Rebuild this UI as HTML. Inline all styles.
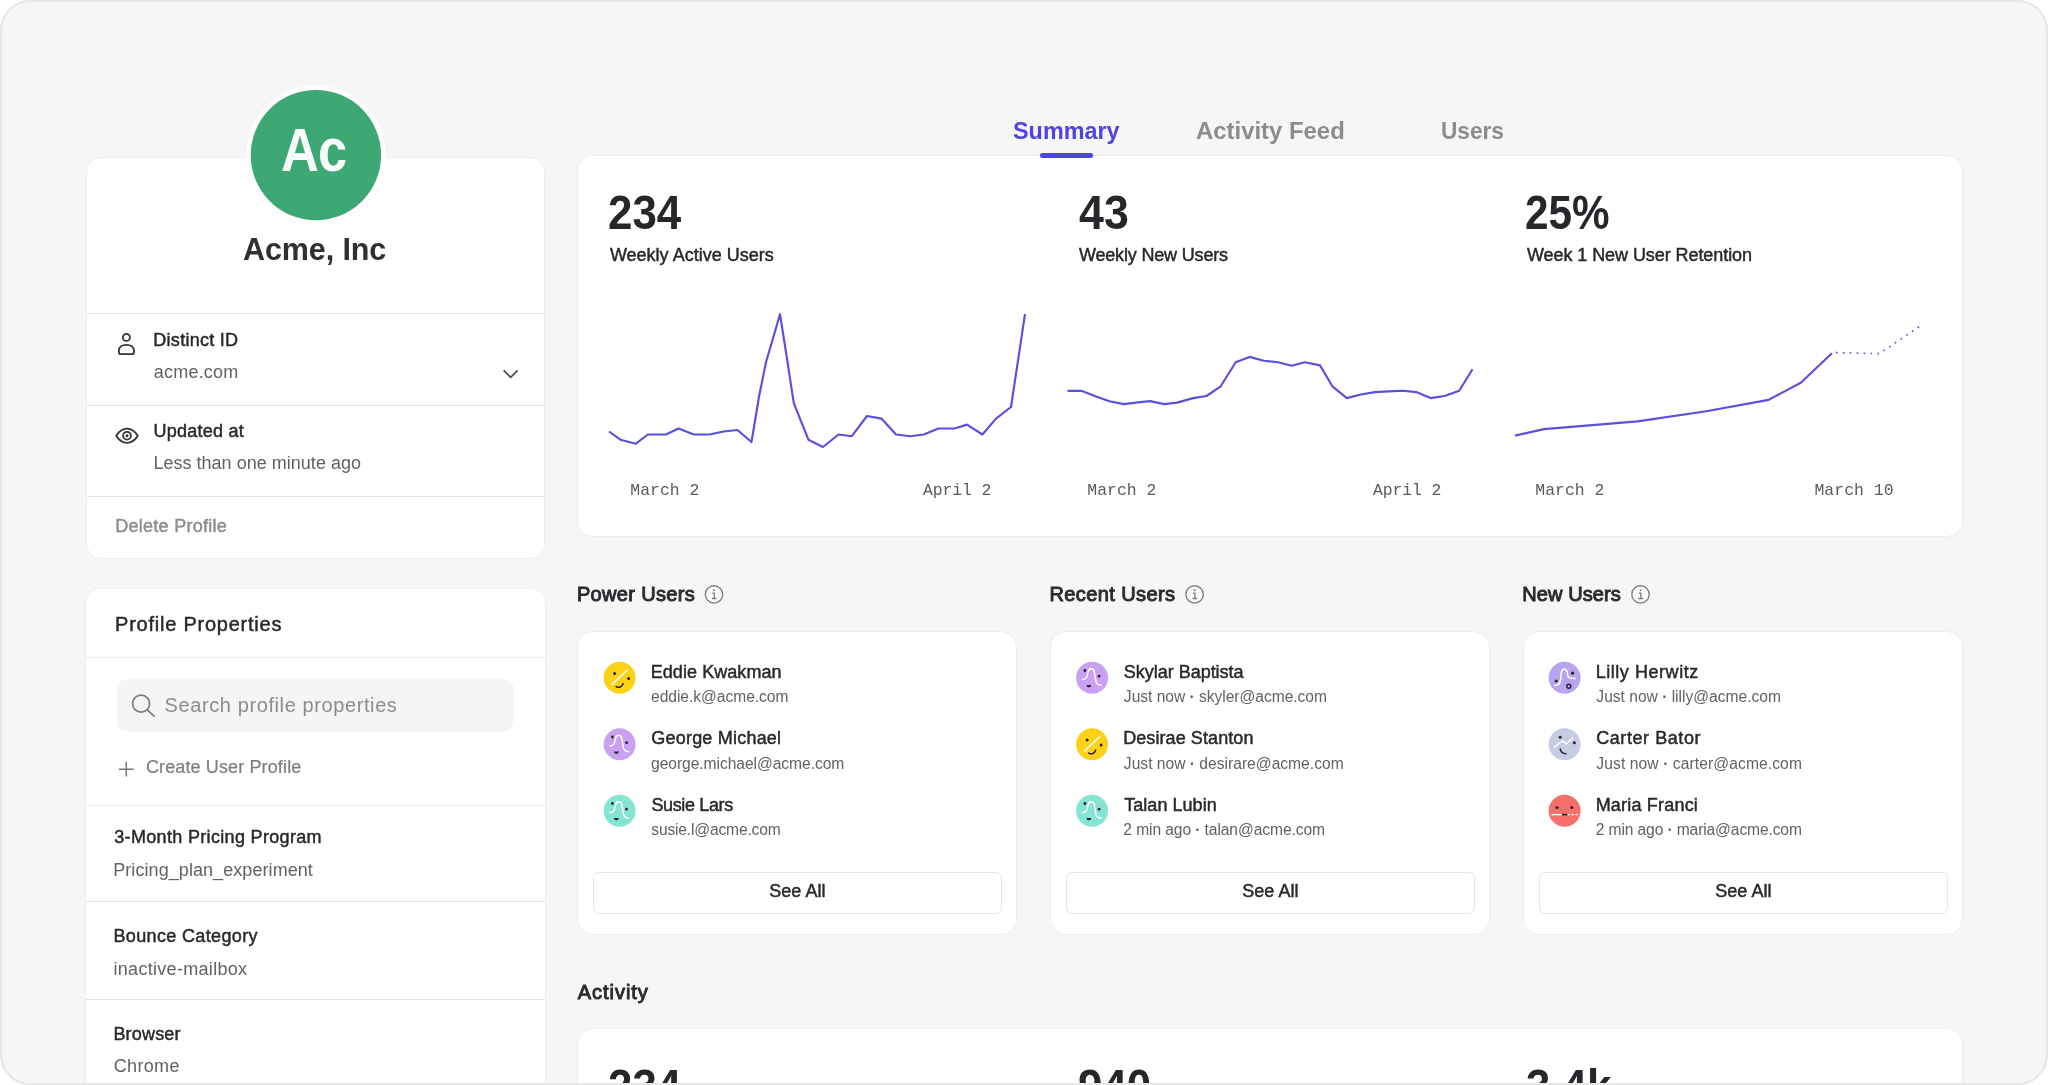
<!DOCTYPE html>
<html lang="en"><head><meta charset="utf-8"><title>Acme, Inc - Profile</title>
<style>
html,body{margin:0;padding:0;background:#fff;}
body{width:2048px;height:1085px;overflow:hidden;position:relative;font-family:"Liberation Sans",sans-serif;color:#27272c;}
#frame{position:absolute;left:0;top:0;width:2043.5px;height:1081px;border:2px solid #e7e7e7;border-right-width:2.5px;border-radius:30px;background:#f6f6f6;overflow:hidden;}
#in{position:absolute;left:-2px;top:-2px;width:2048px;height:1085px;will-change:transform;}
.card{position:absolute;background:#fff;border:1px solid #ededed;box-sizing:border-box;border-radius:16px;}
.t{position:absolute;white-space:nowrap;line-height:1.15;}
.m{-webkit-text-stroke:0.45px currentColor;}
.b{font-weight:bold;}
.sb{-webkit-text-stroke:0.95px currentColor;}
.g{color:#626266;}
.hr{position:absolute;height:1px;background:#e2e2ee;left:87px;width:457px;}
.h2{left:86px;width:459px;}
.mono{font-family:"Liberation Mono","DejaVu Sans Mono",monospace;color:#5a5a5e;}
.btn{position:absolute;box-sizing:border-box;border:1px solid #e6e6e6;border-radius:6px;background:#fff;}
svg{position:absolute;overflow:visible;}
</style></head><body><div id="frame"><div id="in">

<div class="card" style="left:86px;top:157px;width:459px;height:402px;border-radius:15px"></div>
<svg style="left:0;top:0" width="500" height="300"><circle cx="315.9" cy="155.1" r="69.6" fill="#fff"/><circle cx="315.9" cy="155.1" r="65.2" fill="#3ea875"/></svg>
<div class="t b" style="left:281.49px;top:114.69px;font-size:61px;color:#f7fbf9;transform:scaleX(0.8599);transform-origin:0 0;letter-spacing:-1px;">Ac</div>
<div class="t b" style="left:243.04px;top:232.29px;font-size:30.5px;color:#2f2f34;letter-spacing:-0.11px;">Acme, Inc</div>
<div class="hr" style="top:313px"></div>
<div class="hr" style="top:405px"></div>
<div class="hr" style="top:496px"></div>
<div class="t m" style="left:153.34px;top:330.01px;font-size:18px;letter-spacing:0.27px;">Distinct ID</div>
<div class="t g" style="left:153.84px;top:361.91px;font-size:18px;letter-spacing:0.20px;">acme.com</div>
<div class="t m" style="left:153.43px;top:421.41px;font-size:18px;letter-spacing:0.26px;">Updated at</div>
<div class="t g" style="left:153.42px;top:453.21px;font-size:18px;letter-spacing:0.02px;">Less than one minute ago</div>
<div class="t m" style="left:115.24px;top:515.81px;font-size:18px;color:#8e8e91;letter-spacing:0.27px;">Delete Profile</div>
<div class="card" style="left:85px;top:588px;width:461px;height:520px;border-radius:15px"></div>
<div class="t m" style="left:115.08px;top:613.37px;font-size:20px;letter-spacing:0.76px;">Profile Properties</div>
<div class="hr h2" style="top:657px;background:#ebebeb"></div>
<div style="position:absolute;left:117px;top:679px;width:396.5px;height:53px;border-radius:10px;background:#f5f5f5"></div>
<div class="t " style="left:164.59px;top:694.37px;font-size:20px;color:#8c8c8f;letter-spacing:0.60px;">Search profile properties</div>
<div class="t " style="left:145.89px;top:757.41px;font-size:18px;color:#7d7d80;letter-spacing:0.13px;-webkit-text-stroke:0.2px currentColor;">Create User Profile</div>
<div class="hr h2" style="top:805px;background:#ebebeb"></div>
<div class="t m" style="left:114.23px;top:827.31px;font-size:18px;letter-spacing:0.33px;">3-Month Pricing Program</div>
<div class="t g" style="left:113.22px;top:860.31px;font-size:18px;letter-spacing:0.07px;">Pricing_plan_experiment</div>
<div class="hr h2" style="top:901px"></div>
<div class="t m" style="left:113.44px;top:925.71px;font-size:18px;letter-spacing:0.36px;">Bounce Category</div>
<div class="t g" style="left:113.50px;top:958.61px;font-size:18px;letter-spacing:0.30px;">inactive-mailbox</div>
<div class="hr h2" style="top:999px"></div>
<div class="t m" style="left:113.44px;top:1023.51px;font-size:18px;letter-spacing:0.18px;">Browser</div>
<div class="t g" style="left:113.79px;top:1056.41px;font-size:18px;letter-spacing:0.32px;">Chrome</div>
<div class="card" style="left:577px;top:155px;width:1386px;height:382px"></div>
<div class="t b" style="left:608.08px;top:184.15px;font-size:49px;color:#26262b;transform:scaleX(0.8954);transform-origin:0 0;">234</div>
<div class="t m" style="left:609.94px;top:244.91px;font-size:18px;">Weekly Active Users</div>
<div class="t b" style="left:1078.82px;top:184.15px;font-size:49px;color:#26262b;transform:scaleX(0.9135);transform-origin:0 0;">43</div>
<div class="t m" style="left:1078.94px;top:244.91px;font-size:18px;letter-spacing:-0.17px;">Weekly New Users</div>
<div class="t b" style="left:1525.33px;top:184.15px;font-size:49px;color:#26262b;transform:scaleX(0.8625);transform-origin:0 0;">25%</div>
<div class="t m" style="left:1526.94px;top:244.91px;font-size:18px;letter-spacing:-0.07px;">Week 1 New User Retention</div>
<div class="t mono" style="left:630.37px;top:481.50px;font-size:16.4px;letter-spacing:0.03px;">March 2</div>
<div class="t mono" style="left:923.00px;top:481.50px;font-size:16.4px;letter-spacing:-0.09px;">April 2</div>
<div class="t mono" style="left:1087.37px;top:481.50px;font-size:16.4px;letter-spacing:0.03px;">March 2</div>
<div class="t mono" style="left:1373.00px;top:481.50px;font-size:16.4px;letter-spacing:-0.09px;">April 2</div>
<div class="t mono" style="left:1535.37px;top:481.50px;font-size:16.4px;letter-spacing:0.03px;">March 2</div>
<div class="t mono" style="left:1814.47px;top:481.50px;font-size:16.4px;letter-spacing:0.05px;">March 10</div>
<div class="t b" style="left:1012.63px;top:116.82px;font-size:24.5px;color:#4f44e0;transform:scaleX(0.9548);transform-origin:0 0;">Summary</div>
<div style="position:absolute;left:1040px;top:153.4px;width:53px;height:4.4px;border-radius:2.2px;background:#4f44e0"></div>
<div class="t b" style="left:1195.60px;top:116.82px;font-size:24.5px;color:#8c8c8f;transform:scaleX(0.9755);transform-origin:0 0;">Activity Feed</div>
<div class="t b" style="left:1440.94px;top:116.82px;font-size:24.5px;color:#8c8c8f;transform:scaleX(0.9239);transform-origin:0 0;">Users</div>
<div class="t sb" style="left:576.93px;top:583.17px;font-size:20px;color:#2a2a2f;letter-spacing:0.34px;">Power Users</div>
<div class="card" style="left:577px;top:631px;width:440px;height:304px"></div>
<div class="t m" style="left:650.74px;top:661.71px;font-size:18px;letter-spacing:0.06px;">Eddie Kwakman</div>
<div class="t g" style="left:651.04px;top:688.02px;font-size:15.6px;letter-spacing:-0.04px;">eddie.k@acme.com</div>
<div class="t m" style="left:651.31px;top:728.11px;font-size:18px;letter-spacing:0.21px;">George Michael</div>
<div class="t g" style="left:651.04px;top:754.52px;font-size:15.6px;letter-spacing:-0.05px;">george.michael@acme.com</div>
<div class="t m" style="left:651.40px;top:794.81px;font-size:18px;letter-spacing:-0.36px;">Susie Lars</div>
<div class="t g" style="left:651.27px;top:821.02px;font-size:15.6px;letter-spacing:-0.17px;">susie.l@acme.com</div>
<div class="btn" style="left:593px;top:872px;width:409px;height:42px"></div>
<div class="t m" style="left:769.20px;top:881.11px;font-size:18px;letter-spacing:0.06px;">See All</div>
<div class="t sb" style="left:1049.43px;top:583.17px;font-size:20px;color:#2a2a2f;letter-spacing:0.41px;">Recent Users</div>
<div class="card" style="left:1050px;top:631px;width:440px;height:304px"></div>
<div class="t m" style="left:1123.80px;top:661.71px;font-size:18px;letter-spacing:-0.02px;">Skylar Baptista</div>
<div class="t g" style="left:1123.86px;top:688.02px;font-size:15.6px;letter-spacing:-0.03px;">Just now <b>·</b> skyler@acme.com</div>
<div class="t m" style="left:1123.14px;top:728.11px;font-size:18px;letter-spacing:0.09px;">Desirae Stanton</div>
<div class="t g" style="left:1123.86px;top:754.52px;font-size:15.6px;letter-spacing:0.01px;">Just now <b>·</b> desirare@acme.com</div>
<div class="t m" style="left:1124.22px;top:794.81px;font-size:18px;letter-spacing:0.04px;">Talan Lubin</div>
<div class="t g" style="left:1123.32px;top:821.02px;font-size:15.6px;letter-spacing:-0.09px;">2 min ago <b>·</b> talan@acme.com</div>
<div class="btn" style="left:1066px;top:872px;width:409px;height:42px"></div>
<div class="t m" style="left:1242.20px;top:881.11px;font-size:18px;letter-spacing:0.06px;">See All</div>
<div class="t sb" style="left:1522.23px;top:583.17px;font-size:20px;color:#2a2a2f;letter-spacing:0.09px;">New Users</div>
<div class="card" style="left:1523px;top:631px;width:440px;height:304px"></div>
<div class="t m" style="left:1595.64px;top:661.71px;font-size:18px;letter-spacing:0.55px;">Lilly Herwitz</div>
<div class="t g" style="left:1596.36px;top:688.02px;font-size:15.6px;letter-spacing:-0.01px;">Just now <b>·</b> lilly@acme.com</div>
<div class="t m" style="left:1596.21px;top:728.11px;font-size:18px;letter-spacing:0.57px;">Carter Bator</div>
<div class="t g" style="left:1596.36px;top:754.52px;font-size:15.6px;letter-spacing:0.10px;">Just now <b>·</b> carter@acme.com</div>
<div class="t m" style="left:1595.64px;top:794.81px;font-size:18px;letter-spacing:0.20px;">Maria Franci</div>
<div class="t g" style="left:1595.82px;top:821.02px;font-size:15.6px;letter-spacing:-0.12px;">2 min ago <b>·</b> maria@acme.com</div>
<div class="btn" style="left:1539px;top:872px;width:409px;height:42px"></div>
<div class="t m" style="left:1715.20px;top:881.11px;font-size:18px;letter-spacing:0.06px;">See All</div>
<div class="t sb" style="left:577.83px;top:981.27px;font-size:20px;color:#2a2a2f;letter-spacing:0.95px;">Activity</div>
<div class="card" style="left:577px;top:1028px;width:1386px;height:200px"></div>
<div class="b" style="position:absolute;white-space:nowrap;line-height:1.15;left:608.28px;top:1058.05px;font-size:49px;color:#26262b;transform:scaleX(0.8954);transform-origin:0 0">234</div>
<div class="b" style="position:absolute;white-space:nowrap;line-height:1.15;left:1077.98px;top:1058.05px;font-size:49px;color:#26262b;transform:scaleX(0.8954);transform-origin:0 0">940</div>
<div class="b" style="position:absolute;white-space:nowrap;line-height:1.15;left:1525.79px;top:1058.05px;font-size:49px;color:#26262b;transform:scaleX(0.8954);transform-origin:0 0">3.4k</div>
<svg style="left:0;top:0" width="2048" height="1085" fill="none"><g transform="translate(114 331)" stroke="#333338" stroke-width="1.85"><circle cx="12.4" cy="6.4" r="3.5"/><path d="M4.9 21.2 v-1.6 c0-3.9 3.4-5.8 7.5-5.8 s7.5 1.9 7.5 5.8 v1.6 a1.9 1.9 0 0 1 -1.9 1.9 h-11.2 a1.9 1.9 0 0 1 -1.9 -1.9 z"/></g><path d="M503.6 370.4 L510.65 377.3 L517.7 370.4" stroke="#46464a" stroke-width="1.6"/><g transform="translate(115 427)" stroke="#333338" stroke-width="1.8"><path d="M1.2 8.7 C4.4 3.6 8 1.6 12 1.6 S19.6 3.6 22.8 8.7 C19.6 13.8 16 15.8 12 15.8 S4.4 13.8 1.2 8.7 Z" stroke-linejoin="round"/><circle cx="12" cy="8.7" r="3.9"/><circle cx="12" cy="8.7" r="1.5" fill="#333338" stroke="none"/></g><g transform="translate(130 692.6)" stroke="#7b7b7e" stroke-width="1.7"><circle cx="11.1" cy="11.1" r="8.5"/><path d="M17.3 17.3 L24 23.6" stroke-linecap="round"/></g><path transform="translate(118.3 761.2)" d="M8 0.6 V15.4 M0.6 8 H15.4" stroke="#77777a" stroke-width="1.5"/><g stroke="#5b4fe0" stroke-width="2.15" stroke-linejoin="round"><polyline points="609,431.5 620.4,439.7 635.9,443.7 647.9,434.5 666,434.5 678.4,428.5 693.9,434.5 709.6,434.5 723.5,431.5 737.5,430 751.5,442 759,396.7 766,362.3 780,314.2 786.9,358 793.8,403.1 808.4,439.7 823,447 838.5,434.5 851.8,436.2 867,416 881.4,418.6 896,434.5 910.4,436.2 923.8,434.5 938.4,428.5 954.5,428.5 967,424.6 982.4,434.5 996,418.6 1011,407 1025,314.2"/><polyline points="1067.5,390.8 1081.5,390.8 1095.4,396.2 1109.4,401.3 1124,404.1 1137.8,402.4 1150.2,401.1 1164.2,404.1 1177.1,402.6 1193.2,398.1 1206.5,396 1220.7,386.3 1235.7,362.2 1249.5,356.9 1263.7,360.7 1278,362.2 1291.6,365.7 1304.9,362.2 1320,365.4 1332.4,386.3 1346.8,398.1 1360.8,394.5 1374.7,392.1 1388.7,391.4 1402.7,390.8 1416.2,392.1 1430.6,398.1 1444.6,396 1459.2,390.8 1472.5,369.3"/><polyline points="1515,435.6 1544,429.1 1637.5,421.4 1706.3,411.3 1768.6,399.9 1800.8,382.7 1831.9,353.3"/><polyline points="1836,352.6 1879.2,353.7 1921.1,325.4" stroke-width="1.7" stroke-dasharray="1.6 5.3"/></g><g transform="translate(704.0 584.4)" stroke="#7e7e81" stroke-width="1.4"><circle cx="10" cy="10" r="8.7" fill="#fafafa"/><path d="M8.3 8.7 H10.3 V13.9 M7.9 14.1 H12.5" stroke-width="1.3"/><circle cx="10" cy="5.9" r="1" fill="#7a7a7d" stroke="none"/></g><g transform="translate(619.60 677.80)"><circle r="16" fill="#fcd116"/><circle cx="-5" cy="-4.4" r="1.5" fill="#2a2230"/><circle cx="9" cy="0.8" r="1.5" fill="#2a2230"/><path d="M-7.6 6.6 L7.6 -7.6" stroke="#fff" stroke-width="1.5" stroke-linecap="round"/><path d="M-3.4 8.8 C-0.6 10.4 2.4 9.4 3.6 5.8" stroke="#2a2230" stroke-width="1.5" stroke-linecap="round"/></g><g transform="translate(619.60 744.30)"><circle r="16" fill="#c9a1f2"/><circle cx="-7.2" cy="-7.3" r="1.4" fill="#2a2230"/><circle cx="7" cy="-1.6" r="1.4" fill="#2a2230"/><path d="M-9.6 1.6 C-6.8 1.6 -5.6 0.6 -5 -2 L-4.1 -5.6 C-3.5 -10.2 1.7 -10.2 2.3 -5.6 L3.6 2.6 C4.2 6 6 7.4 9.2 7.4" stroke="#fff" stroke-width="1.4" stroke-linecap="round" stroke-linejoin="round"/><path d="M-5.6 7.2 h4.8 a2.4 2.4 0 0 1 -4.8 0 z" fill="#2a2230"/></g><g transform="translate(619.60 810.80)"><circle r="16" fill="#86e4d2"/><circle cx="-7.2" cy="-7.3" r="1.4" fill="#2a2230"/><circle cx="7" cy="-1.6" r="1.4" fill="#2a2230"/><path d="M-9.6 1.6 C-6.8 1.6 -5.6 0.6 -5 -2 L-4.1 -5.6 C-3.5 -10.2 1.7 -10.2 2.3 -5.6 L3.6 2.6 C4.2 6 6 7.4 9.2 7.4" stroke="#fff" stroke-width="1.4" stroke-linecap="round" stroke-linejoin="round"/><path d="M-5.6 7.2 h4.8 a2.4 2.4 0 0 1 -4.8 0 z" fill="#2a2230"/></g><g transform="translate(1184.6 584.4)" stroke="#7e7e81" stroke-width="1.4"><circle cx="10" cy="10" r="8.7" fill="#fafafa"/><path d="M8.3 8.7 H10.3 V13.9 M7.9 14.1 H12.5" stroke-width="1.3"/><circle cx="10" cy="5.9" r="1" fill="#7a7a7d" stroke="none"/></g><g transform="translate(1092.10 677.80)"><circle r="16" fill="#c9a1f2"/><circle cx="-7.2" cy="-7.3" r="1.4" fill="#2a2230"/><circle cx="7" cy="-1.6" r="1.4" fill="#2a2230"/><path d="M-9.6 1.6 C-6.8 1.6 -5.6 0.6 -5 -2 L-4.1 -5.6 C-3.5 -10.2 1.7 -10.2 2.3 -5.6 L3.6 2.6 C4.2 6 6 7.4 9.2 7.4" stroke="#fff" stroke-width="1.4" stroke-linecap="round" stroke-linejoin="round"/><path d="M-5.6 7.2 h4.8 a2.4 2.4 0 0 1 -4.8 0 z" fill="#2a2230"/></g><g transform="translate(1092.10 744.30)"><circle r="16" fill="#fcd116"/><circle cx="-5" cy="-4.4" r="1.5" fill="#2a2230"/><circle cx="9" cy="0.8" r="1.5" fill="#2a2230"/><path d="M-7.6 6.6 L7.6 -7.6" stroke="#fff" stroke-width="1.5" stroke-linecap="round"/><path d="M-3.4 8.8 C-0.6 10.4 2.4 9.4 3.6 5.8" stroke="#2a2230" stroke-width="1.5" stroke-linecap="round"/></g><g transform="translate(1092.10 810.80)"><circle r="16" fill="#86e4d2"/><circle cx="-7.2" cy="-7.3" r="1.4" fill="#2a2230"/><circle cx="7" cy="-1.6" r="1.4" fill="#2a2230"/><path d="M-9.6 1.6 C-6.8 1.6 -5.6 0.6 -5 -2 L-4.1 -5.6 C-3.5 -10.2 1.7 -10.2 2.3 -5.6 L3.6 2.6 C4.2 6 6 7.4 9.2 7.4" stroke="#fff" stroke-width="1.4" stroke-linecap="round" stroke-linejoin="round"/><path d="M-5.6 7.2 h4.8 a2.4 2.4 0 0 1 -4.8 0 z" fill="#2a2230"/></g><g transform="translate(1630.5 584.4)" stroke="#7e7e81" stroke-width="1.4"><circle cx="10" cy="10" r="8.7" fill="#fafafa"/><path d="M8.3 8.7 H10.3 V13.9 M7.9 14.1 H12.5" stroke-width="1.3"/><circle cx="10" cy="5.9" r="1" fill="#7a7a7d" stroke="none"/></g><g transform="translate(1564.60 677.80)"><circle r="16" fill="#b9a4f0"/><circle cx="-8.4" cy="3.2" r="1.6" fill="#2a2230"/><circle cx="8" cy="-4.6" r="1.6" fill="#2a2230"/><path d="M-10 7.6 C-4 7.6 -4 3 -3.6 -3 C-3.2 -10.6 2.4 -10.6 2.8 -4 C3.2 0.4 5 0.6 10.6 0.6" stroke="#fff" stroke-width="1.5" stroke-linecap="round"/><circle cx="4.2" cy="8.4" r="2" stroke="#2a2230" stroke-width="1.5"/></g><g transform="translate(1564.60 744.30)"><circle r="16" fill="#c6cde2"/><circle cx="-4.4" cy="-7" r="1.5" fill="#2a2230"/><circle cx="9.8" cy="-1.6" r="1.5" fill="#2a2230"/><path d="M-10.4 3 L-2 -3.6 L1.6 -0.4 L8 -6.2" stroke="#fff" stroke-width="1.4" stroke-linecap="round" stroke-linejoin="round"/><path d="M-4.4 4.6 C-4 7.6 -1.6 9.4 1.4 9.4" stroke="#2a2230" stroke-width="1.5" stroke-linecap="round"/></g><g transform="translate(1564.60 810.80)"><circle r="16" fill="#f5706c"/><circle cx="-7.6" cy="-3.4" r="1.5" fill="#2a2230"/><circle cx="7.2" cy="-3.4" r="1.5" fill="#2a2230"/><path d="M-13 3.8 H-3" stroke="#fff" stroke-width="1.4"/><path d="M3 3.8 H13" stroke="#fff" stroke-width="1.4" stroke-dasharray="2.4 1.4"/><path d="M-2.6 3.8 H2.6" stroke="#2a2230" stroke-width="1.6"/></g></svg>
</div></div></body></html>
